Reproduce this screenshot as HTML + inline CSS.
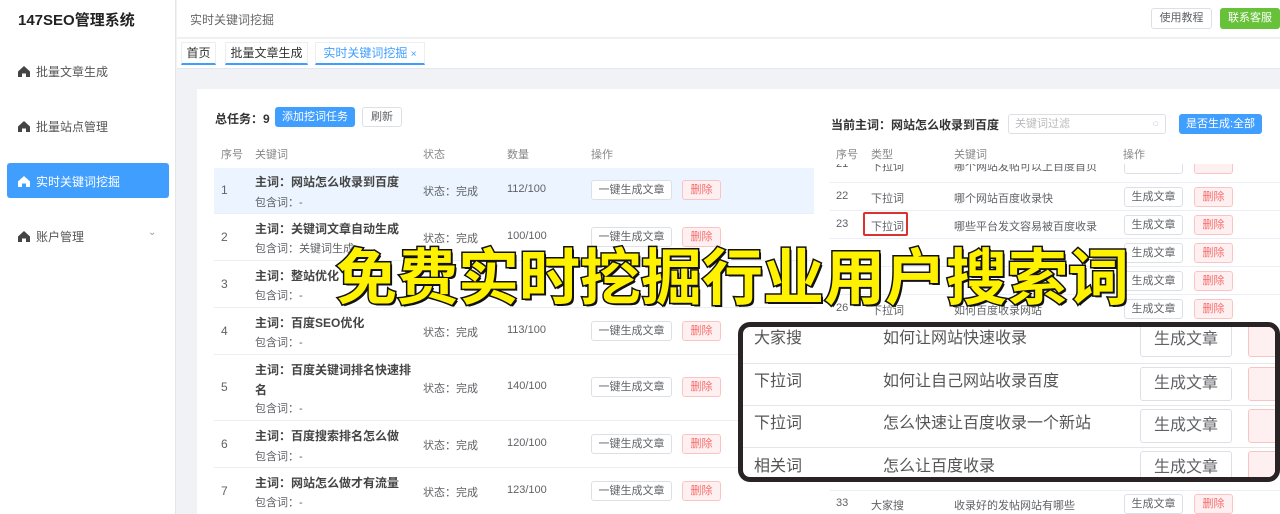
<!DOCTYPE html>
<html><head><meta charset="utf-8"><style>
*{margin:0;padding:0;box-sizing:border-box}
body{width:1280px;height:514px;overflow:hidden;position:relative;background:#f0f2f5;font-family:"Liberation Sans","Noto Sans CJK SC",sans-serif;font-size:12px;color:#606266}
.a{position:absolute;white-space:nowrap}
.btn{position:absolute;border:1px solid #dcdfe6;background:#fff;border-radius:3px;text-align:center;color:#606266;font-size:11px}
.del{position:absolute;border:1px solid #fbc4c4;background:#fef0f0;border-radius:3px;text-align:center;color:#f56c6c;font-size:11px}
.hl{position:absolute;height:1px;background:#ebeef5}
.home{display:inline-block;width:12px;height:11px;vertical-align:-1px;margin-right:6px}
.big{position:absolute;left:336px;top:228px;font-size:61px;font-weight:bold;color:#fff200;-webkit-text-stroke:3px #111;paint-order:stroke fill;letter-spacing:0px;font-family:"Noto Sans CJK SC",sans-serif;white-space:nowrap;text-shadow:2px 2px 0 #111}
</style></head><body>
<div class="a" style="left:0;top:0;width:176px;height:514px;background:#fff;border-right:1px solid #e6e6e6"></div>
<div class="a" style="left:18px;top:9px;font-size:15px;font-weight:bold;color:#222">147SEO管理系统</div>
<svg width="0" height="0" style="position:absolute"><defs><symbol id="h" viewBox="0 0 12 11"><path d="M6 0L0 5.5V11H4V7.5H8V11H12V5.5Z" fill="currentColor"/></symbol></defs></svg>
<div class="a" style="left:18px;top:63px;color:#555;font-size:12px"><svg class="home" style="color:#444"><use href="#h"/></svg>批量文章生成</div>
<div class="a" style="left:18px;top:118px;color:#555"><svg class="home" style="color:#444"><use href="#h"/></svg>批量站点管理</div>
<div class="a" style="left:7px;top:163px;width:162px;height:35px;background:#409eff;border-radius:3px"></div>
<div class="a" style="left:18px;top:173px;color:#fff"><svg class="home" style="color:#fff"><use href="#h"/></svg>实时关键词挖掘</div>
<div class="a" style="left:18px;top:228px;color:#555"><svg class="home" style="color:#444"><use href="#h"/></svg>账户管理</div>
<div class="a" style="left:148px;top:227px;color:#999;font-size:10px">&#8964;</div>
<div class="a" style="left:177px;top:0;width:1103px;height:38px;background:#fff;border-bottom:1px solid #eee"></div>
<div class="a" style="left:190px;top:11px;color:#666">实时关键词挖掘</div>
<div class="btn" style="left:1151px;top:8px;width:61px;height:21px;line-height:19px">使用教程</div>
<div class="a" style="left:1220px;top:8px;width:60px;height:21px;line-height:21px;background:#67c23a;color:#fff;border-radius:3px;text-align:center;font-size:11px">联系客服</div>
<div class="a" style="left:177px;top:39px;width:1103px;height:30px;background:#fff;border-bottom:1px solid #e4e7ed"></div>
<div class="a" style="left:181px;top:42px;width:35px;height:23px;border:1px solid #eee;border-bottom:2px solid #409eff;line-height:20px;text-align:center;color:#333">首页</div>
<div class="a" style="left:225px;top:42px;width:83px;height:23px;border:1px solid #eee;border-bottom:2px solid #409eff;line-height:20px;text-align:center;color:#333">批量文章生成</div>
<div class="a" style="left:315px;top:42px;width:110px;height:23px;border:1px solid #eee;border-bottom:2px solid #409eff;line-height:20px;text-align:center;color:#409eff">实时关键词挖掘 <span style="font-size:10px">×</span></div>
<div class="a" style="left:197px;top:89px;width:1083px;height:425px;background:#fff"></div>
<div class="a" style="left:215px;top:110px;font-weight:bold;color:#333">总任务：9</div>
<div class="a" style="left:275px;top:107px;width:80px;height:20px;background:#409eff;color:#fff;border-radius:3px;text-align:center;line-height:20px;font-size:11px">添加挖词任务</div>
<div class="btn" style="left:362px;top:107px;width:40px;height:20px;line-height:18px">刷新</div>
<div class="a" style="left:221px;top:146px;color:#888;font-size:11px">序号</div>
<div class="a" style="left:255px;top:146px;color:#888;font-size:11px">关键词</div>
<div class="a" style="left:423px;top:146px;color:#888;font-size:11px">状态</div>
<div class="a" style="left:507px;top:146px;color:#888;font-size:11px">数量</div>
<div class="a" style="left:591px;top:146px;color:#888;font-size:11px">操作</div>
<div class="a" style="left:214px;top:168px;width:600px;height:45px;background:#ecf5ff"></div>
<div class="hl" style="left:214px;top:213px;width:600px"></div>
<div class="hl" style="left:214px;top:260px;width:600px"></div>
<div class="hl" style="left:214px;top:307px;width:600px"></div>
<div class="hl" style="left:214px;top:354px;width:600px"></div>
<div class="hl" style="left:214px;top:420px;width:600px"></div>
<div class="hl" style="left:214px;top:467px;width:600px"></div>

<div class="a" style="left:221px;top:183px">1</div><div class="a" style="left:255px;top:173px;font-weight:bold;color:#444">主词：网站怎么收录到百度</div><div class="a" style="left:255px;top:194px;font-size:11px">包含词：-</div><div class="a" style="left:423px;top:183px;font-size:11px">状态：完成</div><div class="a" style="left:507px;top:183px;font-size:11px">112/100</div><div class="btn" style="left:591px;top:180px;width:81px;height:20px;line-height:18px">一键生成文章</div><div class="del" style="left:682px;top:180px;width:39px;height:20px;line-height:18px">删除</div>
<div class="a" style="left:221px;top:230px">2</div><div class="a" style="left:255px;top:220px;font-weight:bold;color:#444">主词：关键词文章自动生成</div><div class="a" style="left:255px;top:240px;font-size:11px">包含词：关键词生成</div><div class="a" style="left:423px;top:230px;font-size:11px">状态：完成</div><div class="a" style="left:507px;top:230px;font-size:11px">100/100</div><div class="btn" style="left:591px;top:227px;width:81px;height:20px;line-height:18px">一键生成文章</div><div class="del" style="left:682px;top:227px;width:39px;height:20px;line-height:18px">删除</div>
<div class="a" style="left:221px;top:277px">3</div><div class="a" style="left:255px;top:267px;font-weight:bold;color:#444">主词：整站优化</div><div class="a" style="left:255px;top:287px;font-size:11px">包含词：-</div>
<div class="a" style="left:221px;top:324px">4</div><div class="a" style="left:255px;top:314px;font-weight:bold;color:#444">主词：百度SEO优化</div><div class="a" style="left:255px;top:334px;font-size:11px">包含词：-</div><div class="a" style="left:423px;top:324px;font-size:11px">状态：完成</div><div class="a" style="left:507px;top:324px;font-size:11px">113/100</div><div class="btn" style="left:591px;top:321px;width:81px;height:20px;line-height:18px">一键生成文章</div><div class="del" style="left:682px;top:321px;width:39px;height:20px;line-height:18px">删除</div>
<div class="a" style="left:221px;top:380px">5</div><div class="a" style="left:255px;top:360px;font-weight:bold;color:#444;line-height:20px">主词：百度关键词排名快速排<br>名</div><div class="a" style="left:255px;top:400px;font-size:11px">包含词：-</div><div class="a" style="left:423px;top:380px;font-size:11px">状态：完成</div><div class="a" style="left:507px;top:380px;font-size:11px">140/100</div><div class="btn" style="left:591px;top:377px;width:81px;height:20px;line-height:18px">一键生成文章</div><div class="del" style="left:682px;top:377px;width:39px;height:20px;line-height:18px">删除</div>
<div class="a" style="left:221px;top:437px">6</div><div class="a" style="left:255px;top:427px;font-weight:bold;color:#444">主词：百度搜索排名怎么做</div><div class="a" style="left:255px;top:448px;font-size:11px">包含词：-</div><div class="a" style="left:423px;top:437px;font-size:11px">状态：完成</div><div class="a" style="left:507px;top:437px;font-size:11px">120/100</div><div class="btn" style="left:591px;top:434px;width:81px;height:20px;line-height:18px">一键生成文章</div><div class="del" style="left:682px;top:434px;width:39px;height:20px;line-height:18px">删除</div>
<div class="a" style="left:221px;top:484px">7</div><div class="a" style="left:255px;top:474px;font-weight:bold;color:#444">主词：网站怎么做才有流量</div><div class="a" style="left:255px;top:494px;font-size:11px">包含词：-</div><div class="a" style="left:423px;top:484px;font-size:11px">状态：完成</div><div class="a" style="left:507px;top:484px;font-size:11px">123/100</div><div class="btn" style="left:591px;top:481px;width:81px;height:20px;line-height:18px">一键生成文章</div><div class="del" style="left:682px;top:481px;width:39px;height:20px;line-height:18px">删除</div>

<div class="a" style="left:831px;top:116px;font-weight:bold;color:#333">当前主词：网站怎么收录到百度</div>
<div class="a" style="left:1008px;top:114px;width:158px;height:20px;border:1px solid #dcdfe6;border-radius:3px;color:#bbb;font-size:11px;line-height:18px;padding-left:6px">关键词过滤<span style="position:absolute;right:6px;color:#ccc">&#9675;</span></div>
<div class="a" style="left:1179px;top:114px;width:83px;height:20px;background:#409eff;color:#fff;border-radius:3px;text-align:center;line-height:20px;font-size:11px">是否生成:全部</div>
<div class="a" style="left:836px;top:146px;color:#888;font-size:11px">序号</div>
<div class="a" style="left:871px;top:146px;color:#888;font-size:11px">类型</div>
<div class="a" style="left:954px;top:146px;color:#888;font-size:11px">关键词</div>
<div class="a" style="left:1123px;top:146px;color:#888;font-size:11px">操作</div>
<div class="a" style="left:830px;top:164px;width:450px;height:12px;overflow:hidden"><div class="a" style="left:6px;top:-6px;font-size:11px">21</div><div class="a" style="left:41px;top:-6px;font-size:11px">下拉词</div><div class="a" style="left:124px;top:-6px;font-size:11px">哪个网站发帖可以上百度首页</div><div class="btn" style="left:294px;top:-10px;width:59px;height:20px"></div><div class="del" style="left:364px;top:-10px;width:39px;height:20px"></div></div>
<div class="hl" style="left:830px;top:182px;width:450px"></div>
<div class="a" style="left:836px;top:190px;font-size:11px">22</div><div class="a" style="left:871px;top:190px;font-size:11px">下拉词</div><div class="a" style="left:954px;top:190px;font-size:11px">哪个网站百度收录快</div><div class="btn" style="left:1124px;top:187px;width:59px;height:20px;line-height:18px">生成文章</div><div class="del" style="left:1194px;top:187px;width:39px;height:20px;line-height:18px">删除</div>
<div class="hl" style="left:830px;top:210px;width:450px"></div>
<div class="a" style="left:836px;top:218px;font-size:11px">23</div><div class="a" style="left:863px;top:212px;width:45px;height:24px;border:2px solid #d9322f;border-radius:2px"></div><div class="a" style="left:871px;top:218px;font-size:11px">下拉词</div><div class="a" style="left:954px;top:218px;font-size:11px">哪些平台发文容易被百度收录</div><div class="btn" style="left:1124px;top:215px;width:59px;height:20px;line-height:18px">生成文章</div><div class="del" style="left:1194px;top:215px;width:39px;height:20px;line-height:18px">删除</div>
<div class="hl" style="left:830px;top:238px;width:450px"></div>
<div class="btn" style="left:1124px;top:243px;width:59px;height:20px;line-height:18px">生成文章</div><div class="del" style="left:1194px;top:243px;width:39px;height:20px;line-height:18px">删除</div>
<div class="hl" style="left:830px;top:266px;width:450px"></div>
<div class="btn" style="left:1124px;top:271px;width:59px;height:20px;line-height:18px">生成文章</div><div class="del" style="left:1194px;top:271px;width:39px;height:20px;line-height:18px">删除</div>
<div class="hl" style="left:830px;top:294px;width:450px"></div>
<div class="a" style="left:836px;top:302px;font-size:11px">26</div><div class="a" style="left:871px;top:302px;font-size:11px">下拉词</div><div class="a" style="left:954px;top:302px;font-size:11px">如何百度收录网站</div><div class="btn" style="left:1124px;top:299px;width:59px;height:20px;line-height:18px">生成文章</div><div class="del" style="left:1194px;top:299px;width:39px;height:20px;line-height:18px">删除</div>
<div class="hl" style="left:830px;top:490px;width:450px"></div>
<div class="a" style="left:836px;top:497px;font-size:11px">33</div><div class="a" style="left:871px;top:497px;font-size:11px">大家搜</div><div class="a" style="left:954px;top:497px;font-size:11px">收录好的发帖网站有哪些</div><div class="btn" style="left:1124px;top:494px;width:59px;height:20px;line-height:18px">生成文章</div><div class="del" style="left:1194px;top:494px;width:39px;height:20px;line-height:18px">删除</div>

<div class="a" style="left:738px;top:322px;width:542px;height:160px;border:5px solid #2a2325;border-radius:12px;background:#fff;overflow:hidden">
 <div class="a" style="left:0;top:36px;width:540px;height:1px;background:#e6e6e6"></div>
 <div class="a" style="left:0;top:78px;width:540px;height:1px;background:#e6e6e6"></div>
 <div class="a" style="left:0;top:120px;width:540px;height:1px;background:#e6e6e6"></div>
 <div class="a" style="left:11px;top:-3px;font-size:16px;color:#555">大家搜</div><div class="a" style="left:140px;top:-3px;font-size:16px;color:#555">如何让网站快速收录</div>
 <div class="a" style="left:11px;top:40px;font-size:16px;color:#555">下拉词</div><div class="a" style="left:140px;top:40px;font-size:16px;color:#555">如何让自己网站收录百度</div>
 <div class="a" style="left:11px;top:82px;font-size:16px;color:#555">下拉词</div><div class="a" style="left:140px;top:82px;font-size:16px;color:#555">怎么快速让百度收录一个新站</div>
 <div class="a" style="left:11px;top:125px;font-size:16px;color:#555">相关词</div><div class="a" style="left:140px;top:125px;font-size:16px;color:#555">怎么让百度收录</div>
 <div class="btn" style="left:397px;top:-4px;width:92px;height:34px;line-height:32px;font-size:16px">生成文章</div><div class="del" style="left:505px;top:-4px;width:40px;height:34px"></div>
 <div class="btn" style="left:397px;top:40px;width:92px;height:34px;line-height:32px;font-size:16px">生成文章</div><div class="del" style="left:505px;top:40px;width:40px;height:34px"></div>
 <div class="btn" style="left:397px;top:82px;width:92px;height:34px;line-height:32px;font-size:16px">生成文章</div><div class="del" style="left:505px;top:82px;width:40px;height:34px"></div>
 <div class="btn" style="left:397px;top:124px;width:92px;height:34px;line-height:32px;font-size:16px">生成文章</div><div class="del" style="left:505px;top:124px;width:40px;height:34px"></div>
</div>

<div class="big">免费实时挖掘行业用户搜索词</div>
</body></html>
